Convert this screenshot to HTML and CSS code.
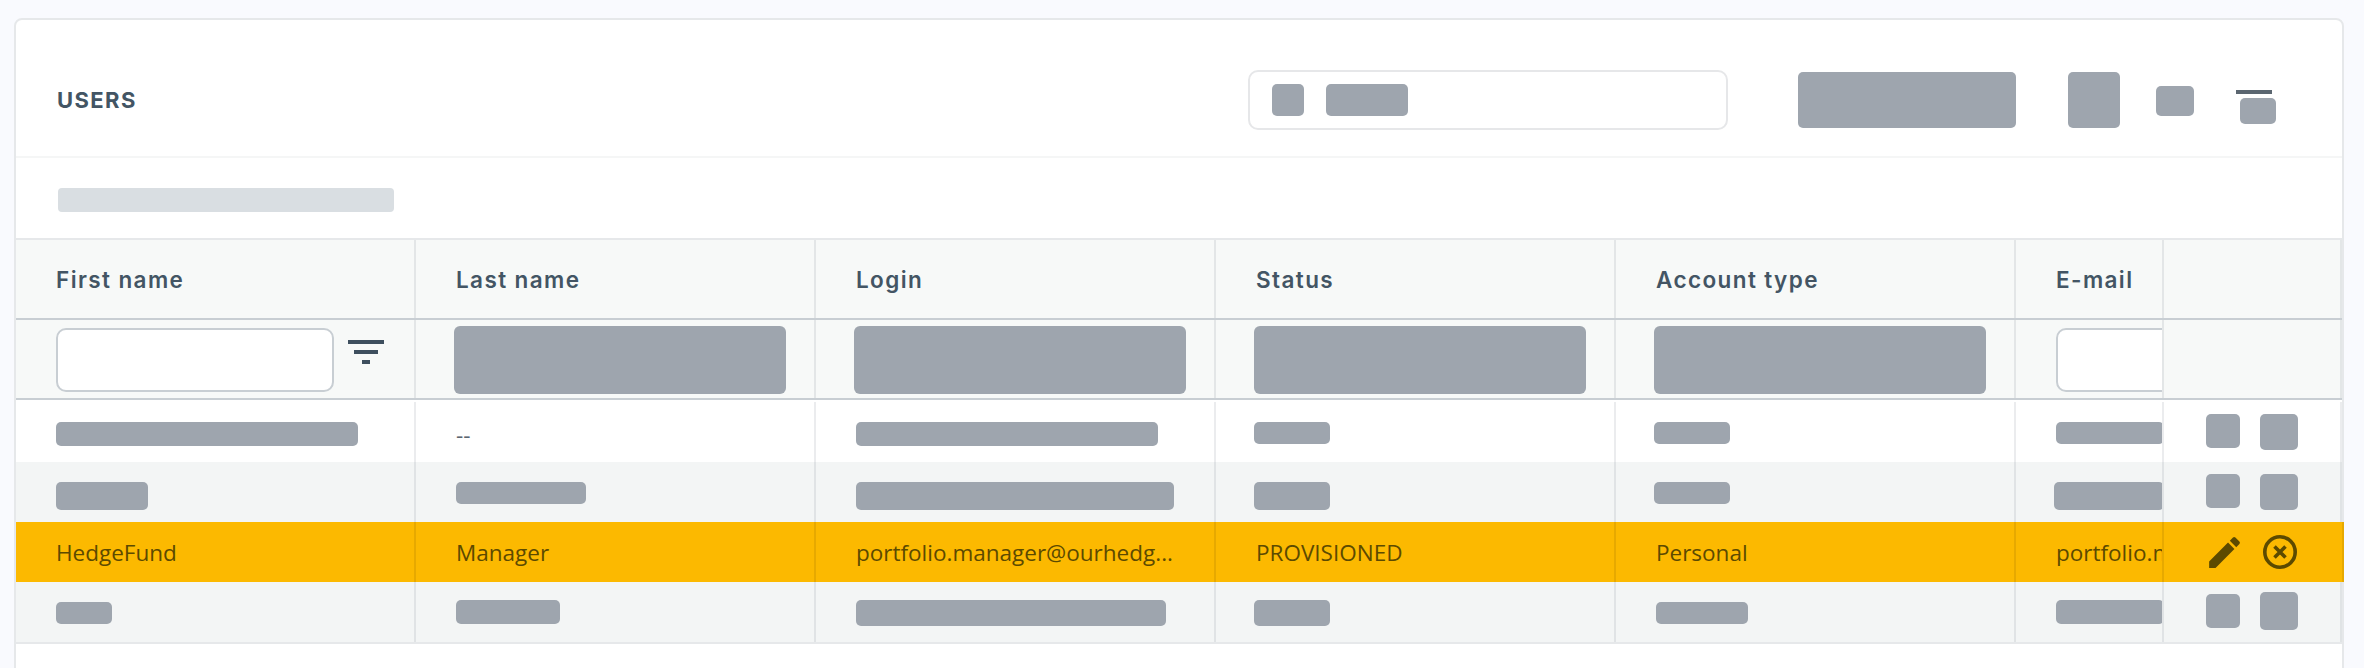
FILE: index.html
```html
<!DOCTYPE html>
<html lang="en">
<head>
    <meta charset="UTF-8">
    <meta name="viewport" content="width=device-width, initial-scale=1.0">
    <title>Users</title>
    <link rel="stylesheet" href="styles.css">
</head>
<body>
    <section class="card">
        <header class="toolbar">
            <h1 class="title">USERS</h1>
            <div class="search">
                <span class="sk w-32 h-32"></span>
                <span class="sk w-82 h-32"></span>
            </div>
            <span class="sk tool-main"></span>
            <span class="sk tool-square"></span>
            <span class="sk tool-small"></span>
            <div class="tool-stack">
                <span class="tool-bar"></span>
                <span class="sk tool-box"></span>
            </div>
        </header>

        <div class="summary"><span class="sk-light"></span></div>

        <div class="row head">
            <div class="cell">First name</div>
            <div class="cell">Last name</div>
            <div class="cell">Login</div>
            <div class="cell">Status</div>
            <div class="cell">Account type</div>
            <div class="cell email">E-mail</div>
            <div class="cell actions"></div>
        </div>

        <div class="row filters">
            <div class="cell">
                <input class="filter-input" type="text">
                <span class="filter-icon"><i></i><i></i><i></i></span>
            </div>
            <div class="cell"><span class="sk filter-block"></span></div>
            <div class="cell"><span class="sk filter-block"></span></div>
            <div class="cell"><span class="sk filter-block"></span></div>
            <div class="cell"><span class="sk filter-block"></span></div>
            <div class="cell email"><input class="filter-input" type="text"></div>
            <div class="cell actions"></div>
        </div>

        <div class="row tall">
            <div class="cell"><span class="sk w-302 h-24"></span></div>
            <div class="cell dash">--</div>
            <div class="cell"><span class="sk w-302 h-24"></span></div>
            <div class="cell"><span class="sk w-76 h-22 shift-l"></span></div>
            <div class="cell"><span class="sk w-76 h-22 shift-l"></span></div>
            <div class="cell email"><span class="sk w-108 h-22"></span></div>
            <div class="cell actions">
                <span class="sk w-34 h-34"></span>
                <span class="sk w-38 h-36"></span>
            </div>
        </div>

        <div class="row striped">
            <div class="cell"><span class="sk w-92 h-28"></span></div>
            <div class="cell"><span class="sk w-130 h-22"></span></div>
            <div class="cell"><span class="sk w-318 h-28"></span></div>
            <div class="cell"><span class="sk w-76 h-28 shift-l"></span></div>
            <div class="cell"><span class="sk w-76 h-22 shift-l"></span></div>
            <div class="cell email"><span class="sk w-110 h-28 shift-l"></span></div>
            <div class="cell actions">
                <span class="sk w-34 h-34"></span>
                <span class="sk w-38 h-36"></span>
            </div>
        </div>

        <div class="row selected">
            <div class="cell">HedgeFund</div>
            <div class="cell">Manager</div>
            <div class="cell">portfolio.manager@ourhedg...</div>
            <div class="cell">PROVISIONED</div>
            <div class="cell">Personal</div>
            <div class="cell email">portfolio.manager@ourhedg...</div>
            <div class="cell actions">
                <svg class="icon-edit" viewBox="0 0 24 24" width="41" height="41">
                    <path d="M3 17.25V21h3.75L17.81 9.94l-3.75-3.75L3 17.25zM20.71 7.04a1 1 0 0 0 0-1.41l-2.34-2.34a1 1 0 0 0-1.41 0l-1.83 1.83 3.75 3.75 1.83-1.83z"/>
                </svg>
                <svg class="icon-cancel" viewBox="0 0 34 34" width="34" height="34">
                    <circle cx="17" cy="17" r="15.2"/>
                    <path d="M11.5 11.5l11 11M22.5 11.5l-11 11"/>
                </svg>
            </div>
        </div>

        <div class="row striped last">
            <div class="cell"><span class="sk w-56 h-22 down"></span></div>
            <div class="cell"><span class="sk w-104 h-24"></span></div>
            <div class="cell"><span class="sk w-310 h-26"></span></div>
            <div class="cell"><span class="sk w-76 h-26 shift-l"></span></div>
            <div class="cell"><span class="sk w-92 h-22 down"></span></div>
            <div class="cell email"><span class="sk w-108 h-24"></span></div>
            <div class="cell actions">
                <span class="sk w-34 h-34 down"></span>
                <span class="sk w-38 h-38"></span>
            </div>
        </div>
    </section>
</body>
</html>
```

FILE: styles.css
```css
html, body {
    height: 100%;
}
body {
    margin: 0;
    overflow: hidden;
    background-color: #f9fafe;
    font-family: "Open Sans", sans-serif;
    font-size: 22.5px;
    color: #435564;
}
.card {
    height: 660px;
    margin: 18px 20px 0 14px;
    box-sizing: border-box;
    background-color: #fff;
    border: 2px solid #e6e8ea;
    border-radius: 8px 8px 0 0;
}

/* toolbar */
.toolbar {
    display: flex;
    align-items: center;
    height: 138px;
    box-sizing: border-box;
    padding: 24px 0 0 41px;
    border-bottom: 2px solid #f5f6f6;
}
.title {
    width: 1191px;
    margin: 0;
    font-family: Inter, sans-serif;
    font-size: 22px;
    font-weight: 700;
    letter-spacing: 1.4px;
}
.search {
    display: flex;
    align-items: center;
    gap: 22px;
    width: 480px;
    height: 60px;
    box-sizing: border-box;
    padding-left: 22px;
    border: 2px solid #e6e7e9;
    border-radius: 10px;
    margin-right: 70px;
}
.tool-main {
    width: 218px;
    height: 56px;
    margin-right: 52px;
}
.tool-square {
    width: 52px;
    height: 56px;
    margin-right: 36px;
}
.tool-small {
    width: 38px;
    height: 30px;
    margin: 2px 42px 0 0;
}
.tool-stack {
    display: flex;
    flex-direction: column;
    align-items: flex-start;
    margin-top: 14px;
}
.tool-bar {
    width: 36px;
    height: 4px;
    background-color: #5b6670;
    margin-bottom: 4px;
}
.tool-box {
    width: 36px;
    height: 26px;
    margin-left: 4px;
}

/* skeleton blocks */
.sk {
    display: block;
    flex: none;
    background-color: #9ea5ae;
    border-radius: 5px;
}
.w-32 { width: 32px; }
.w-34 { width: 34px; }
.w-38 { width: 38px; }
.w-56 { width: 56px; }
.w-76 { width: 76px; }
.w-82 { width: 82px; }
.w-92 { width: 92px; }
.w-104 { width: 104px; }
.w-108 { width: 108px; }
.w-110 { width: 110px; }
.w-130 { width: 130px; }
.w-302 { width: 302px; }
.w-310 { width: 310px; }
.w-318 { width: 318px; }
.h-22 { height: 22px; }
.h-24 { height: 24px; }
.h-26 { height: 26px; }
.h-28 { height: 28px; }
.h-32 { height: 32px; }
.h-34 { height: 34px; }
.h-36 { height: 36px; }
.h-38 { height: 38px; }
.shift-l { margin-left: -2px; }
.down { margin-top: 2px; }

.summary {
    height: 80px;
    box-sizing: border-box;
    padding: 30px 0 0 42px;
}
.sk-light {
    display: block;
    width: 336px;
    height: 24px;
    background-color: #d9dee2;
    border-radius: 4px;
}

/* table */
.row {
    display: flex;
    height: 60px;
}
.cell {
    display: flex;
    align-items: flex-start;
    flex: none;
    width: 400px;
    box-sizing: border-box;
    padding: 20px 0 0 40px;
    border-right: 2px solid rgba(60, 70, 90, 0.1);
    white-space: nowrap;
}
.cell.email {
    width: 146px;
    border-right: none;
    overflow: hidden;
}
.cell.actions {
    width: 180px;
    padding: 12px 0 0 42px;
    gap: 20px;
    border-left: 2px solid rgba(60, 70, 90, 0.1);
}
.head {
    height: 78px;
    background-color: #f7f9f8;
    border-top: 2px solid #e6e8ea;
    border-bottom: 2px solid #c8ced3;
}
.head .cell {
    align-items: center;
    padding-top: 0;
    font-family: Inter, sans-serif;
    font-size: 22.5px;
    font-weight: 600;
    letter-spacing: 1.4px;
}
.filters {
    height: 78px;
    background-color: #f7f9f8;
    border-bottom: 2px solid #c8ced3;
}
.filters .cell {
    padding: 6px 0 0 38px;
}
.filters .cell:first-child,
.filters .cell.email {
    padding: 8px 0 0 40px;
}
.filter-block {
    width: 332px;
    height: 68px;
    border-radius: 6px;
}
.filter-input {
    flex: none;
    width: 278px;
    height: 64px;
    box-sizing: border-box;
    margin: 0;
    padding: 0;
    background-color: #fff;
    border: 2px solid #c8ced3;
    border-radius: 10px;
}
.filter-icon {
    display: flex;
    flex-direction: column;
    align-items: center;
    gap: 6px;
    width: 36px;
    margin: 12px 0 0 14px;
}
.filter-icon i {
    display: block;
    height: 4px;
    background-color: #3e4f5e;
}
.filter-icon i:nth-child(1) { width: 36px; }
.filter-icon i:nth-child(2) { width: 24px; }
.filter-icon i:nth-child(3) { width: 8px; }

.tall {
    margin-top: 2px;
}
.dash {
    line-height: 26px;
    color: #5c6670;
}
.striped {
    background-color: #f3f5f5;
}
.selected {
    margin-right: -2px;
    background-color: #fcb900;
    color: #5c4a00;
}
.selected .cell {
    align-items: center;
    padding-top: 0;
    border-color: rgba(80, 60, 0, 0.12);
}
.selected .cell.actions {
    width: 182px;
    padding: 0 0 0 44px;
    gap: 18px;
}
.icon-edit {
    flex: none;
    margin-left: -4px;
    fill: #5c4a00;
}
.icon-cancel {
    flex: none;
    fill: none;
    stroke: #5c4a00;
    stroke-width: 3.6;
}
.last {
    border-bottom: 2px solid #e6e8ea;
}
.last .cell {
    padding-top: 18px;
}
.last .cell.actions {
    padding-top: 10px;
}
```
